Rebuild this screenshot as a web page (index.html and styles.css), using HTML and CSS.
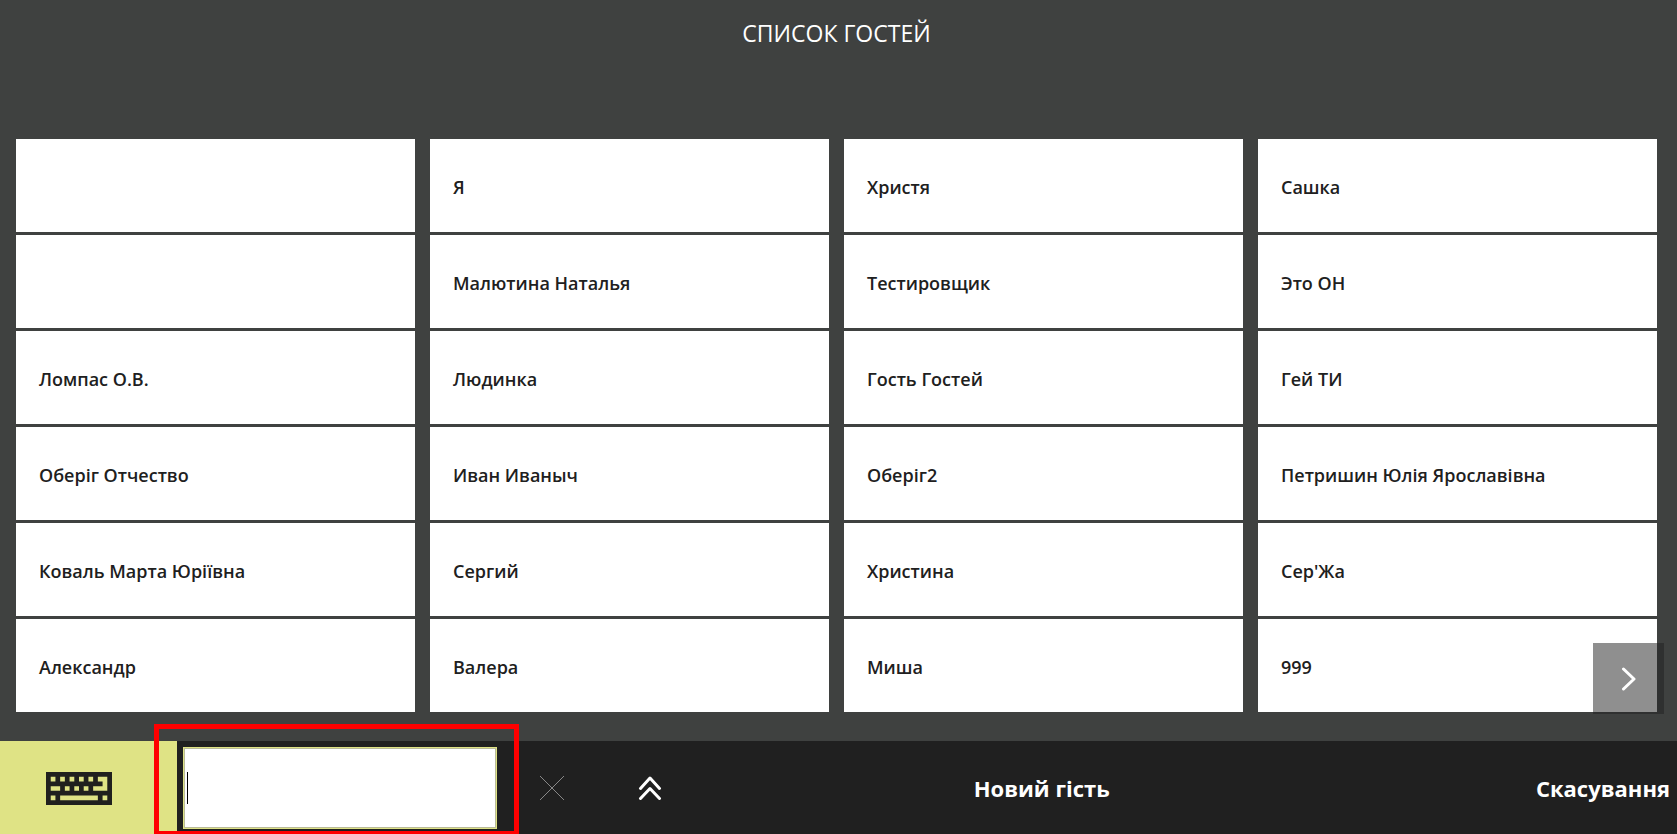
FILE: index.html
```html
<!DOCTYPE html>
<html lang="uk">
<head>
<meta charset="utf-8">
<title>Список гостей</title>
<meta name="viewport" content="width=device-width, initial-scale=1">
<link rel="stylesheet" href="styles.css">
</head>
<body>
<div class="screen">
  <header class="header">
    <h1 class="title">СПИСОК ГОСТЕЙ</h1>
  </header>

  <main class="content">
    <div class="guests">
      <button class="guest" type="button" aria-label="Гість без імені"></button>
      <button class="guest" type="button">Я</button>
      <button class="guest" type="button">Христя</button>
      <button class="guest" type="button">Сашка</button>

      <button class="guest" type="button" aria-label="Гість без імені"></button>
      <button class="guest" type="button">Малютина Наталья</button>
      <button class="guest" type="button">Тестировщик</button>
      <button class="guest" type="button">Это ОН</button>

      <button class="guest" type="button">Ломпас О.В.</button>
      <button class="guest" type="button">Людинка</button>
      <button class="guest" type="button">Гость Гостей</button>
      <button class="guest" type="button">Гей ТИ</button>

      <button class="guest" type="button">Оберіг Отчество</button>
      <button class="guest" type="button">Иван Иваныч</button>
      <button class="guest" type="button">Оберіг2</button>
      <button class="guest" type="button">Петришин Юлія Ярославівна</button>

      <button class="guest" type="button">Коваль Марта Юріївна</button>
      <button class="guest" type="button">Сергий</button>
      <button class="guest" type="button">Христина</button>
      <button class="guest" type="button">Сер'Жа</button>

      <button class="guest" type="button">Александр</button>
      <button class="guest" type="button">Валера</button>
      <button class="guest" type="button">Миша</button>
      <button class="guest" type="button">999</button>
    </div>
    <button class="next" type="button" aria-label="Наступна сторінка">
      <svg width="24" height="24" viewBox="0 0 24 24" fill="none" stroke="#fff" stroke-width="3" stroke-linecap="round" stroke-linejoin="round"><path d="M6.500 2 17 12 6.500 22"/></svg>
    </button>
  </main>

  <footer class="bar">
    <button class="keyboard" type="button" aria-label="Клавіатура">
      <svg width="66" height="33" viewBox="0 0 14 7"><path fill="#20201e" fill-rule="evenodd" d="M0 0h14v7H0zM1 1v1h1V1zM3 1v1h1V1zM5 1v1h1V1zM7 1v1h1V1zM9 1v1h1V1zM11 1v1h1v1h-2v1h3V1zM1 3v1h2V3zM4 3v1h1V3zM6 3v1h1V3zM8 3v1h1V3zM1 5v1h1V5zM3 5v1h8V5zM12 5v1h1V5z"/></svg>
    </button>
    <div class="search">
      <input class="search-input" type="text" aria-label="Пошук гостя">
      <span class="caret"></span>
      <span class="highlight"></span>
    </div>
    <button class="icon-button" type="button" aria-label="Очистити">
      <svg width="24" height="24" viewBox="0 0 24 24" fill="none" stroke="#888" stroke-width="1"><path d="M0 0 24 24M24 0 0 24"/></svg>
    </button>
    <button class="icon-button" type="button" aria-label="Розгорнути">
      <svg width="24" height="24" viewBox="0 0 24 24" fill="none" stroke="#fff" stroke-width="3" stroke-linecap="round" stroke-linejoin="round"><path d="M2.500 12.500 12 2 21.500 12.500M2.500 22.500 12 12.500 21.500 22.500"/></svg>
    </button>
    <button class="action action-new" type="button">Новий гість</button>
    <button class="action action-cancel" type="button">Скасування</button>
  </footer>
</div>
</body>
</html>
```
FILE: styles.css
```css
* {
  box-sizing: border-box;
}

body {
  margin: 0;
  background: #3f4140;
  font-family: "Open Sans", "Noto Sans", sans-serif;
}

button {
  margin: 0;
  padding: 0;
  border: 0;
  background: none;
  font-family: inherit;
  cursor: pointer;
}

svg {
  display: block;
}

.screen {
  display: flex;
  flex-direction: column;
  min-height: 100vh;
  overflow: hidden;
}

.header {
  padding: 17px 20px 90px 16px;
  text-align: center;
}

.title {
  margin: 0;
  color: #fff;
  font-size: 23px;
  font-weight: 400;
  line-height: 32px;
}

.content {
  position: relative;
  flex: 1;
  padding: 0 20px 29px 16px;
}

.guests {
  display: grid;
  grid-template-columns: repeat(4, 1fr);
  gap: 3px 15px;
}

.guest {
  height: 93px;
  padding: 3px 23px 0;
  background: #fff;
  color: #202020;
  font-size: 18px;
  font-weight: 600;
  line-height: 28px;
  text-align: left;
}

.next {
  position: absolute;
  right: 13px;
  bottom: 27px;
  display: flex;
  align-items: center;
  justify-content: center;
  width: 71px;
  height: 71px;
  background: rgba(32, 32, 32, 0.5);
}

.bar {
  display: flex;
  height: 93px;
  background: #202020;
}

.keyboard {
  display: flex;
  align-items: center;
  width: 177px;
  padding: 2px 0 0 46px;
  background: #dfe385;
}

.search {
  position: relative;
  width: 326px;
  padding: 6px 6px 5px;
}

.search-input {
  width: 100%;
  height: 100%;
  padding: 0 8px;
  border: 1px solid #dfe385;
  outline: 1px solid #b9bb98;
  outline-offset: -2px;
  border-radius: 0;
  background: #fff;
  font-family: inherit;
  font-size: 24px;
}

.caret {
  position: absolute;
  top: 31px;
  left: 10px;
  width: 1px;
  height: 32px;
  background: #000;
}

.highlight {
  position: absolute;
  top: -17px;
  right: -16px;
  bottom: -2px;
  left: -23px;
  border: 5px solid #f00;
  pointer-events: none;
}

.icon-button {
  display: flex;
  align-items: center;
  justify-content: center;
  width: 98px;
  padding-top: 1px;
}

.action {
  padding-top: 1px;
  color: #fff;
  font-size: 22px;
  font-weight: 700;
  line-height: 32px;
}

.action-new {
  flex: 12;
}

.action-cancel {
  flex: 5;
  padding-right: 7px;
  text-align: right;
}
```
